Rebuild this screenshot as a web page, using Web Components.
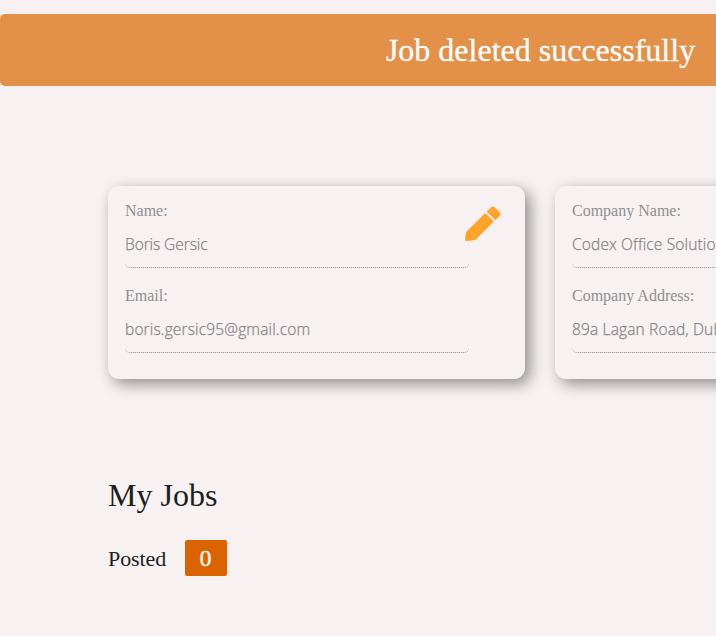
<!DOCTYPE html>
<html lang="en">
<head>
<meta charset="utf-8">
<title>My Jobs</title>
<style>
html, body { margin: 0; height: 100%; overflow: hidden; background: #f7f1f1; }
body { font-family: "Liberation Serif", "Times New Roman", serif; color: #1c1f22; }
</style>
</head>
<body>
<account-page></account-page>
<script>
const define = (name, html) => {
  const template = document.createElement('template');
  template.innerHTML = html;
  customElements.define(name, class extends HTMLElement {
    constructor() {
      super();
      this.attachShadow({ mode: 'open' }).append(template.content.cloneNode(true));
    }
  });
};

define('flash-banner', `<style>
:host { display: flex; box-sizing: border-box; width: 1081px; height: 72px; justify-content: center; align-items: center;
  border-radius: 5px; background: #e39049; color: #fff; font-size: 32px; line-height: 38px; white-space: nowrap; }
span { -webkit-text-stroke: .3px #fff; }
</style><span><slot></slot></span>`);

define('info-card', `<style>
:host { display: flex; box-sizing: border-box; flex: none; width: 417px; height: 193px; padding: 15px 24px 0 17px; border-radius: 11px;
  background: #f7f1f1; box-shadow: 5px 5px 15px rgba(0,0,0,.42); justify-content: space-between; }
.fields { flex: none; width: 344px; }
::slotted([slot=action]) { margin: 5px 0 0 -5px; }
</style><div class="fields"><slot></slot></div><slot name="action"></slot>`);

define('info-field', `<style>
:host { display: block; height: 85px; color: #8f8f8f; white-space: nowrap; }
.label { height: 20px; font-size: 16px; line-height: 20px; }
.value { box-sizing: border-box; height: 47px; padding-top: 11px; font: 300 15.5px/24px "Open Sans", "Noto Sans", sans-serif;
  letter-spacing: var(--tracking, .15px); color: #858585; -webkit-text-stroke: .25px #858585; border-bottom: 1px dotted #888; border-radius: 5px; }
</style><div class="label"><slot name="label"></slot></div><div class="value"><slot></slot></div>`);

define('pencil-icon', `<style>
:host { display: block; flex: none; width: 36px; height: 36px; } svg { display: block; }
</style><svg width="36" height="36" viewBox="0 0 36 36" fill="#ffa32b">
<path d="M20.2 7.1 28.8 15.5 11.2 33.1Q9.8 34.3 8 34.5L.8 35Q0 35 .1 34.2L.7 27.1Q.8 26.3 1.4 25.7Z"/>
<path d="M21.7 5.7 26.2 1.2Q27.8-.2 29.5 1.1L34.3 6Q35.8 8 34.5 10L30.5 14.3Z"/></svg>`);

define('count-badge', `<style>
:host { display: flex; box-sizing: border-box; width: 42px; height: 36px; padding-right: 1px; justify-content: center; align-items: center; border-radius: 2px; background: #db6400; color: #fff; font-size: 24px; line-height: 36px; -webkit-text-stroke: .3px #fff; }
</style><slot></slot>`);

define('jobs-summary', `<style>
:host { display: block; }
h2 { margin: 0; font-size: 32px; font-weight: 400; line-height: 38px; }
.row { display: flex; align-items: center; gap: 19px; margin-top: 26px; font-size: 22px; line-height: 36px; }
.word { width: 58px; padding-top: 1px; height: 35px; letter-spacing: -.1px; }
</style><h2><slot name="title"></slot></h2><div class="row"><span class="word"><slot name="label"></slot></span><slot></slot></div>`);

define('account-page', `<style>
:host { display: block; box-sizing: border-box; height: 636px; padding-top: 14px; overflow: hidden; }
.cards { display: flex; gap: 30px; margin: 100px 0 0 108px; }
.name { --tracking: -.08px; }
jobs-summary { margin: 97px 0 0 108px; }
</style>
<flash-banner>Job deleted successfully</flash-banner>
<div class="cards">
<info-card>
<info-field class="name"><span slot="label">Name:</span>Boris Gersic</info-field>
<info-field><span slot="label">Email:</span>boris.gersic95@gmail.com</info-field>
<pencil-icon slot="action"></pencil-icon>
</info-card>
<info-card>
<info-field><span slot="label">Company Name:</span>Codex Office Solutio</info-field>
<info-field><span slot="label">Company Address:</span>89a Lagan Road, Dub</info-field>
</info-card>
</div>
<jobs-summary><span slot="title">My Jobs</span><span slot="label">Posted</span><count-badge>0</count-badge></jobs-summary>`);
</script>
</body>
</html>
